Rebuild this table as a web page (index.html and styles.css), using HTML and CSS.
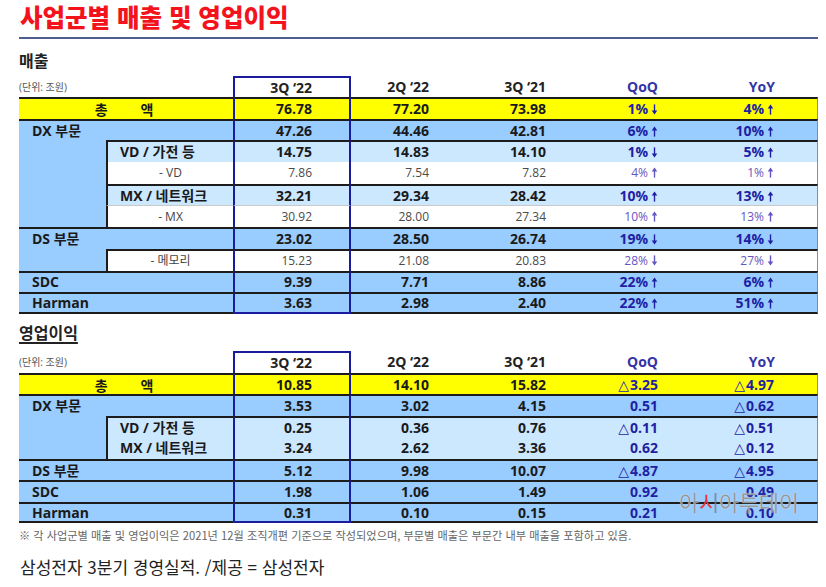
FILE: index.html
```html
<!DOCTYPE html>
<html lang="ko">
<head>
<meta charset="utf-8">
<title>사업군별 매출 및 영업이익</title>
<link rel="stylesheet" href="styles.css">
</head>
<body>
<svg class="defs" aria-hidden="true">
  <symbol id="up" viewBox="0 0 7 11"><path d="M3.5 10.6V2.5" stroke="currentColor" stroke-width="1.4" fill="none"/><path d="M0.7 4.4L3.5 0.4L6.3 4.4Z" fill="currentColor"/></symbol>
  <symbol id="dn" viewBox="0 0 7 11"><path d="M3.5 0.4V8.5" stroke="currentColor" stroke-width="1.4" fill="none"/><path d="M0.7 6.6L3.5 10.6L6.3 6.6Z" fill="currentColor"/></symbol>
</svg>
<div class="page">
  <h1 class="title">사업군별 매출 및 영업이익</h1>
  <div class="rule"></div>

  <h2 class="sec">매출</h2>
  <table class="tbl t1">
    <colgroup><col class="c1"><col class="c2"><col class="c3"><col class="c4"><col class="c5"><col class="c6"><col class="c7"></colgroup>
    <tr class="hdr">
      <td colspan="2" class="unit">(단위: 조원)</td>
      <td class="hl hl-top">3Q ‘22</td><td>2Q ‘22</td><td>3Q ‘21</td><td class="q qe">QoQ</td><td class="q">YoY</td>
    </tr>
    <tr class="yel bt">
      <td colspan="2" class="tot">총 액</td>
      <td class="hl">76.78</td><td>77.20</td><td>73.98</td>
      <td class="q qe">1%<svg class="ar"><use href="#dn"/></svg></td><td class="q">4%<svg class="ar"><use href="#up"/></svg></td>
    </tr>
    <tr class="blu bt">
      <td colspan="2" class="main">DX 부문</td>
      <td class="hl">47.26</td><td>44.46</td><td>42.81</td>
      <td class="q qe">6%<svg class="ar"><use href="#up"/></svg></td><td class="q">10%<svg class="ar"><use href="#up"/></svg></td>
    </tr>
    <tr class="lit bt">
      <td rowspan="4" class="side"></td>
      <td class="sub">VD / 가전 등</td>
      <td class="hl">14.75</td><td>14.83</td><td>14.10</td>
      <td class="q qe">1%<svg class="ar"><use href="#dn"/></svg></td><td class="q">5%<svg class="ar"><use href="#up"/></svg></td>
    </tr>
    <tr class="wht">
      <td class="subc">- VD</td>
      <td class="hl">7.86</td><td>7.54</td><td>7.82</td>
      <td class="q qe">4%<svg class="ar"><use href="#up"/></svg></td><td class="q">1%<svg class="ar"><use href="#up"/></svg></td>
    </tr>
    <tr class="lit bt">
      <td class="sub">MX / 네트워크</td>
      <td class="hl">32.21</td><td>29.34</td><td>28.42</td>
      <td class="q qe">10%<svg class="ar"><use href="#up"/></svg></td><td class="q">13%<svg class="ar"><use href="#up"/></svg></td>
    </tr>
    <tr class="wht bthin">
      <td class="subc">- MX</td>
      <td class="hl">30.92</td><td>28.00</td><td>27.34</td>
      <td class="q qe">10%<svg class="ar"><use href="#up"/></svg></td><td class="q">13%<svg class="ar"><use href="#up"/></svg></td>
    </tr>
    <tr class="blu bt">
      <td colspan="2" class="main">DS 부문</td>
      <td class="hl">23.02</td><td>28.50</td><td>26.74</td>
      <td class="q qe">19%<svg class="ar"><use href="#dn"/></svg></td><td class="q">14%<svg class="ar"><use href="#dn"/></svg></td>
    </tr>
    <tr class="wht bt">
      <td class="side"></td>
      <td class="subc">- 메모리</td>
      <td class="hl">15.23</td><td>21.08</td><td>20.83</td>
      <td class="q qe">28%<svg class="ar"><use href="#dn"/></svg></td><td class="q">27%<svg class="ar"><use href="#dn"/></svg></td>
    </tr>
    <tr class="blu bt">
      <td colspan="2" class="main">SDC</td>
      <td class="hl">9.39</td><td>7.71</td><td>8.86</td>
      <td class="q qe">22%<svg class="ar"><use href="#up"/></svg></td><td class="q">6%<svg class="ar"><use href="#up"/></svg></td>
    </tr>
    <tr class="blu bt last">
      <td colspan="2" class="main">Harman</td>
      <td class="hl">3.63</td><td>2.98</td><td>2.40</td>
      <td class="q qe">22%<svg class="ar"><use href="#up"/></svg></td><td class="q">51%<svg class="ar"><use href="#up"/></svg></td>
    </tr>
  </table>

  <h2 class="sec sec2">영업이익</h2>
  <div class="t2wrap">
    <table class="tbl t2">
      <colgroup><col class="c1"><col class="c2"><col class="c3"><col class="c4"><col class="c5"><col class="c6"><col class="c7"></colgroup>
      <tr class="hdr">
        <td colspan="2" class="unit">(단위: 조원)</td>
        <td class="hl hl-top">3Q ‘22</td><td>2Q ‘22</td><td>3Q ‘21</td><td class="q qe">QoQ</td><td class="q">YoY</td>
      </tr>
      <tr class="yel bt">
        <td colspan="2" class="tot">총 액</td>
        <td class="hl">10.85</td><td>14.10</td><td>15.82</td>
        <td class="q qe"><span class="tri">△</span>3.25</td><td class="q"><span class="tri">△</span>4.97</td>
      </tr>
      <tr class="blu bt">
        <td colspan="2" class="main">DX 부문</td>
        <td class="hl">3.53</td><td>3.02</td><td>4.15</td>
        <td class="q qe">0.51</td><td class="q"><span class="tri">△</span>0.62</td>
      </tr>
      <tr class="lit bt">
        <td rowspan="2" class="side"></td>
        <td class="sub">VD / 가전 등</td>
        <td class="hl">0.25</td><td>0.36</td><td>0.76</td>
        <td class="q qe"><span class="tri">△</span>0.11</td><td class="q"><span class="tri">△</span>0.51</td>
      </tr>
      <tr class="lit">
        <td class="sub">MX / 네트워크</td>
        <td class="hl">3.24</td><td>2.62</td><td>3.36</td>
        <td class="q qe">0.62</td><td class="q"><span class="tri">△</span>0.12</td>
      </tr>
      <tr class="blu bt">
        <td colspan="2" class="main">DS 부문</td>
        <td class="hl">5.12</td><td>9.98</td><td>10.07</td>
        <td class="q qe"><span class="tri">△</span>4.87</td><td class="q"><span class="tri">△</span>4.95</td>
      </tr>
      <tr class="blu bt">
        <td colspan="2" class="main">SDC</td>
        <td class="hl">1.98</td><td>1.06</td><td>1.49</td>
        <td class="q qe">0.92</td><td class="q">0.49</td>
      </tr>
      <tr class="blu bt last">
        <td colspan="2" class="main">Harman</td>
        <td class="hl">0.31</td><td>0.10</td><td>0.15</td>
        <td class="q qe">0.21</td><td class="q">0.10</td>
      </tr>
    </table>
    <div class="wm">아<span class="wm-s">시</span>아투데이</div>
  </div>

  <p class="note">※ 각 사업군별 매출 및 영업이익은 2021년 12월 조직개편 기준으로 작성되었으며, 부문별 매출은 부문간 내부 매출을 포함하고 있음.</p>
  <p class="caption">삼성전자 3분기 경영실적. /제공 = 삼성전자</p>
</div>
</body>
</html>
```

FILE: styles.css
```css
* { box-sizing: border-box; }
html, body { margin: 0; padding: 0; background: #ffffff; }
body {
  font-family: "Open Sans", "Noto Sans CJK KR", sans-serif;
  color: #1a1a1a;
}
.defs { position: absolute; width: 0; height: 0; overflow: hidden; }

.page { width: 826px; padding-left: 19px; }

.title {
  margin: 0;
  padding: 1px 0 0 1px;
  height: 34px;
  line-height: 32px;
  font-family: "Noto Sans CJK KR", sans-serif;
  font-size: 24.5px;
  font-weight: 900;
  color: #f2131c;
}
.rule {
  margin-top: 3px;
  width: 799px;
  height: 2px;
  background: #4e5e8e;
}

.sec {
  margin: 11px 0 0;
  font-family: "Noto Sans CJK KR", sans-serif;
  font-size: 16px;
  line-height: 20px;
  font-weight: 700;
  color: #222222;
}
.sec2 {
  margin-top: 8px;
  text-decoration: underline;
  text-decoration-thickness: 1.5px;
  text-underline-offset: 3px;
}

.tbl {
  width: 799px;
  margin-top: 6px;
  border-collapse: separate;
  border-spacing: 0;
  table-layout: fixed;
}
.t2 { margin-top: 0; }
.t2wrap { position: relative; margin-top: 9px; }
.c1 { width: 87px; }
.c2 { width: 127px; }
.c3 { width: 118px; }
.c4 { width: 117px; }
.c5 { width: 117px; }
.c6 { width: 116px; }
.c7 { width: 117px; }

.tbl td {
  padding: 0 39px 0 0;
  text-align: right;
  vertical-align: middle;
  font-size: 14px;
  font-weight: 700;
  line-height: 1;
  white-space: nowrap;
  color: #1a1a1a;
}
.tbl td.q { color: #1f1fa3; padding-right: 43px; }
.tbl td.qe { padding-right: 43px; }

.t1 tr { height: 21.7px; }
.t2 tr { height: 21.5px; }
.tbl tr.hdr { height: 21px; }
.t2 tr.hdr { height: 22px; }

.hdr td { color: #222222; }
.hdr td.q { color: #3434a6; }
.tbl td.unit {
  text-align: left;
  padding: 0;
  font-size: 10px;
  font-weight: 400;
  color: #555555;
}

/* row fills */
.yel td { background: #ffff00; }
.blu td { background: #99ccff; }
.lit td { background: #cce8ff; }
.wht td { background: #ffffff; }
.tbl td.side { background: #99ccff; }

/* row lines */
.bt td:not(.side) { border-top: 2px solid #1c1c1c; }
.bthin td:not(.side) { border-top: 1px solid #c9c9c9; }
.last td { border-bottom: 2px solid #1c1c1c; }
.tbl tr:not(.hdr) td:last-child { border-right: 1px solid #8c8c8c; }

/* highlighted column */
.tbl td.hl {
  border-left: 2px solid #1b1b9e;
  border-right: 2px solid #1b1b9e;
  padding-right: 37px;
}
.tbl td.hl-top { border-top: 2px solid #1b1b9e; }
.tbl .last td.hl { border-bottom-color: #1b1b9e; }

/* labels */
.tbl td.tot {
  text-align: center;
  padding: 0 4px 0 0;
  word-spacing: 29px;
  font-family: "Noto Sans CJK KR", sans-serif;
}
.tbl td.main { text-align: left; padding: 0 0 0 13px; }
.tbl td.sub {
  text-align: left;
  padding: 0 0 0 12px;
  border-left: 2px solid #1c1c1c;
}
.tbl td.subc {
  text-align: center;
  padding: 0;
  border-left: 2px solid #1c1c1c;
  font-size: 12px;
  font-weight: 400;
  color: #444444;
}
.wht td { font-size: 12px; font-weight: 400; color: #4a4a4a; }
.wht td.q { color: #6456c2; }

.ar {
  width: 7px;
  height: 11px;
  margin-left: 3px;
  vertical-align: -1px;
}
.tri {
  font-family: "DejaVu Sans", sans-serif;
  font-weight: 400;
  font-size: 14px;
  margin-right: 1px;
}

.wm {
  position: absolute;
  left: 660px;
  top: 139px;
  font-family: "Noto Sans CJK KR", sans-serif;
  font-size: 22px;
  line-height: 1;
  font-weight: 400;
  letter-spacing: -0.3px;
  color: rgba(125, 125, 125, 0.8);
  text-shadow: 0 0 1px #ffffff;
}
.wm-s {
  background: linear-gradient(to right, #e8333a 0 58%, rgba(125, 125, 125, 0.8) 58% 100%);
  -webkit-background-clip: text;
  background-clip: text;
  color: transparent;
  text-shadow: none;
}

.note {
  margin: 5px 0 0;
  font-family: "Noto Sans CJK KR", sans-serif;
  font-size: 11.2px;
  line-height: 14px;
  color: #666666;
  white-space: nowrap;
}
.caption {
  margin: 14px 0 0;
  padding-left: 1px;
  font-family: "Noto Sans CJK KR", sans-serif;
  font-size: 17px;
  line-height: 22px;
  color: #222222;
}
```
